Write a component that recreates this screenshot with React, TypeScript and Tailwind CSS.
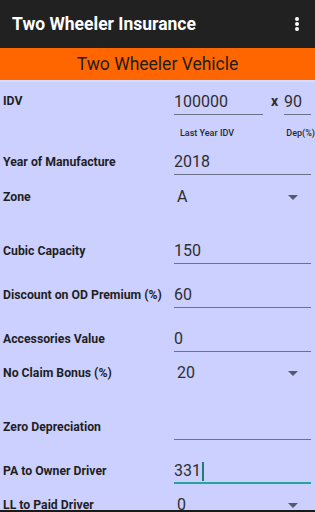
import React from "react";

const font = { fontFamily: "Roboto, 'Noto Sans', sans-serif" };

function Label({ children }: { children: React.ReactNode }) {
  return (
    <div className="w-[174px] shrink-0 pl-[3px] text-[12.25px] font-bold text-[#1f1f1f] whitespace-nowrap">
      {children}
    </div>
  );
}

function Field({ value, focused }: { value?: string; focused?: boolean }) {
  return (
    <div
      className={
        "flex-1 mr-[4px] pt-[3px] text-[16px] leading-[20px] text-[#2e2e2e] " +
        (focused ? "pb-[1px] border-b-2 border-[#26a69a]" : "pb-[2px] border-b border-[#6d7185]")
      }
    >
      <span className="inline-flex items-center h-[20px]">
        {value || "\u00a0"}
        {focused && <span className="ml-[1px] w-[2px] h-[19px] bg-[#1f7f78]" />}
      </span>
    </div>
  );
}

function Spinner({ value }: { value: string }) {
  return (
    <div className="flex-1 flex items-center justify-between pl-[3px] pr-[17px] text-[16px] leading-[20px] text-[#2e2e2e]">
      <span>{value}</span>
      <svg width="10" height="5" viewBox="0 0 10 5">
        <path d="M0 0h10L5 5z" fill="#555a6b" />
      </svg>
    </div>
  );
}

function Row({ h, children }: { h: string; children: React.ReactNode }) {
  return <div className={"flex items-center shrink-0 " + h}>{children}</div>;
}

export default function App() {
  return (
    <div className="w-[315px] h-[512px] flex flex-col bg-[#ccd0ff] overflow-hidden" style={font}>
      <header className="h-[48px] shrink-0 bg-[#212121] flex items-center justify-between pl-[12px] pr-[16px]">
        <h1 className="text-[17.5px] font-bold text-white">Two Wheeler Insurance</h1>
        <div className="flex flex-col gap-[1px] items-center">
          <span className="w-[4px] h-[4px] rounded-full bg-white" />
          <span className="w-[4px] h-[4px] rounded-full bg-white" />
          <span className="w-[4px] h-[4px] rounded-full bg-white" />
        </div>
      </header>
      <div className="h-[32px] shrink-0 bg-[#ff6600] flex items-center justify-center text-[17.5px] text-[#1e1e1e]">
        Two Wheeler Vehicle
      </div>
      <div className="h-[2px] shrink-0 bg-[#d8dbff]" />

      <div className="flex-1 flex flex-col overflow-hidden">
        <Row h="h-[39px]">
          <Label>IDV</Label>
          <div className="flex-1 flex items-center">
            <div className="w-[93px]">
              <Field value="100000" />
            </div>
            <span className="w-[17px] pl-[4px] text-[14px] font-bold text-[#2e2e2e]">x</span>
            <div className="flex-1">
              <Field value="90" />
            </div>
          </div>
        </Row>
        <Row h="h-[26px]">
          <div className="w-[180px] shrink-0" />
          <span className="w-[107px] text-[9px] font-medium text-[#2a2a2a]">Last Year IDV</span>
          <span className="text-[9px] font-medium text-[#2a2a2a] whitespace-nowrap">Dep(%)</span>
        </Row>
        <Row h="h-[30px]">
          <Label>Year of Manufacture</Label>
          <Field value="2018" />
        </Row>
        <Row h="h-[40px]">
          <Label>Zone</Label>
          <Spinner value="A" />
        </Row>
        <div className="h-[14px] shrink-0" />
        <Row h="h-[40px]">
          <Label>Cubic Capacity</Label>
          <Field value="150" />
        </Row>
        <Row h="h-[48px]">
          <Label>Discount on OD Premium (%)</Label>
          <Field value="60" />
        </Row>
        <Row h="h-[40px]">
          <Label>Accessories Value</Label>
          <Field value="0" />
        </Row>
        <Row h="h-[28px]">
          <Label>No Claim Bonus (%)</Label>
          <Spinner value="20" />
        </Row>
        <div className="h-[20px] shrink-0" />
        <Row h="h-[40px]">
          <Label>Zero Depreciation</Label>
          <Field />
        </Row>
        <Row h="h-[48px]">
          <Label>PA to Owner Driver</Label>
          <Field value="331" focused />
        </Row>
        <Row h="h-[20px]">
          <Label>LL to Paid Driver</Label>
          <Spinner value="0" />
        </Row>
      </div>
      <div className="h-[2px] shrink-0 bg-[#1a1a1a]" />
    </div>
  );
}
